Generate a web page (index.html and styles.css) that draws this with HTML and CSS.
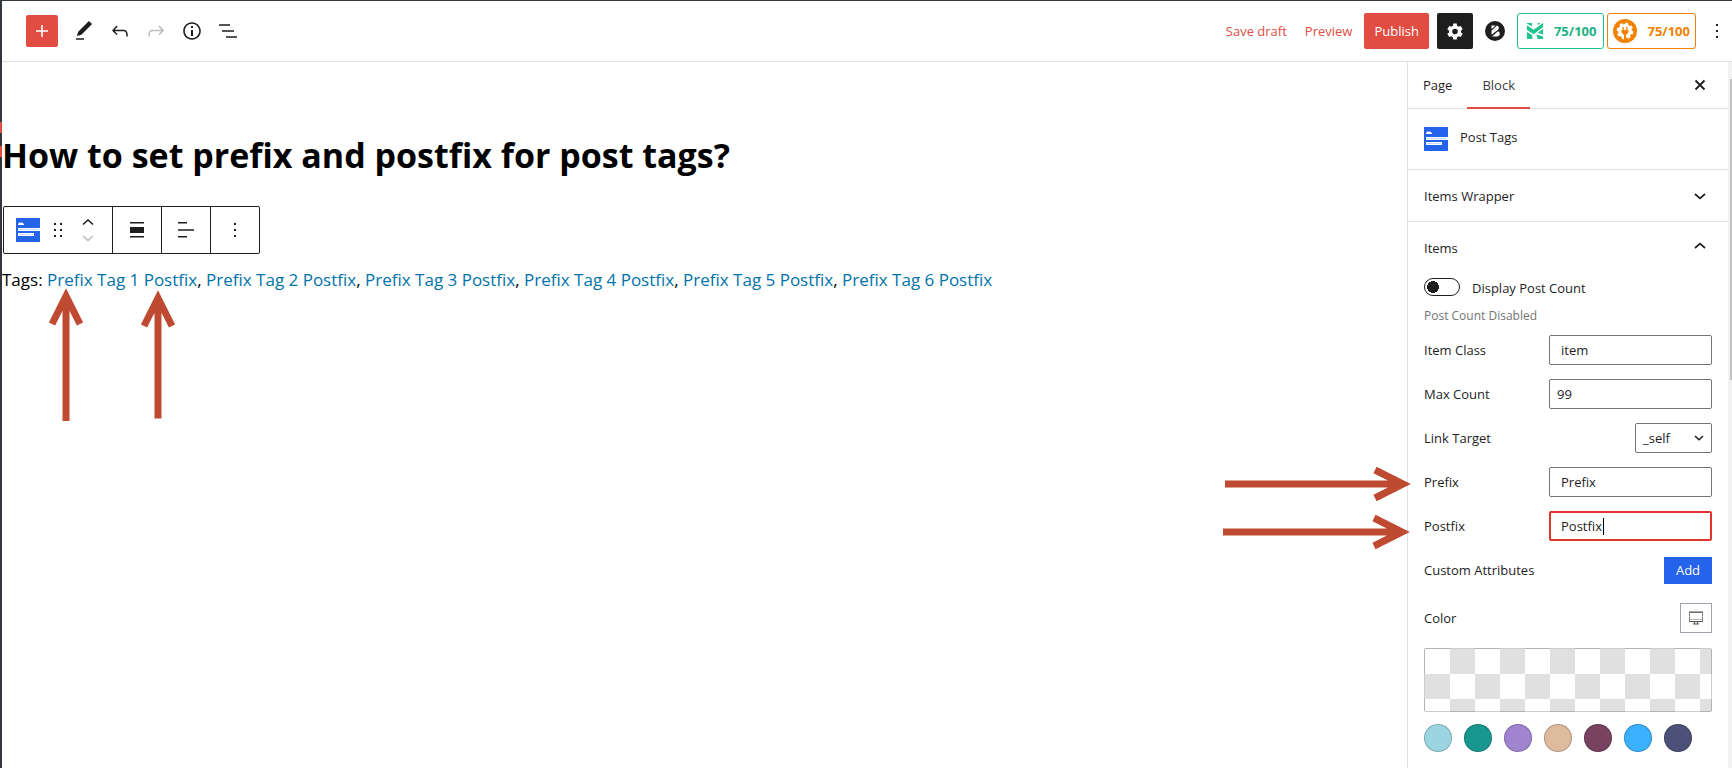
FILE: index.html
```html
<!DOCTYPE html>
<html lang="en">
<head>
<meta charset="utf-8">
<title>Edit Page</title>
<link rel="stylesheet" href="styles.css">
</head>
<body>
<div class="app">
  <div class="rail"><span class="rail-mark"></span><span class="rail-mark"></span></div>
  <div class="editor">
    <header class="topbar">
      <div class="tools">
        <button class="btn-insert" aria-label="Add block"><svg viewBox="0 0 24 24"><path d="M18 11.2h-5.2V6h-1.6v5.2H6v1.6h5.2V18h1.6v-5.2H18z"/></svg></button>
        <button class="icon-btn" aria-label="Tools"><svg viewBox="0 0 24 24"><path d="M20.1 5.1L16.9 2 6.2 12.7l-1.3 4.4 4.5-1.3L20.1 5.1zM4 20.8h8v-1.5H4v1.5z"/></svg></button>
        <button class="icon-btn" aria-label="Undo"><svg viewBox="0 0 24 24"><path d="M18.3 11.7c-.6-.6-1.4-.9-2.3-.9H6.7l2.9-3.3-1.1-1-4.5 5L8.500 16l1-1-2.700-2.700H16c.5 0 .9.2 1.300.5 1 1 1 3.400 1 4.500v.3h1.500v-.2c0-1.500 0-4.300-1.500-5.700z"/></svg></button>
        <button class="icon-btn icon-off" aria-label="Redo"><svg viewBox="0 0 24 24"><path d="M15.600 6.500l-1.100 1 2.900 3.300H8c-.9 0-1.700.3-2.300.9-1.400 1.500-1.400 4.200-1.400 5.600v.2h1.500v-.3c0-1.100 0-3.500 1-4.500.3-.3.7-.5 1.300-.5h9.200L14.500 15l1.100 1.100 4.600-4.600-4.600-5z"/></svg></button>
        <button class="icon-btn" aria-label="Details"><svg viewBox="0 0 24 24"><path d="M12 3.200c-4.800 0-8.800 3.900-8.800 8.800 0 4.800 3.900 8.800 8.800 8.800 4.800 0 8.800-3.900 8.800-8.800 0-4.800-4-8.800-8.800-8.800zm0 16c-4 0-7.200-3.300-7.200-7.200C4.800 8 8 4.800 12 4.800s7.200 3.300 7.200 7.200c0 4-3.200 7.200-7.200 7.200zM11 17h2v-6h-2v6zm0-8h2V7h-2v2z"/></svg></button>
        <button class="icon-btn" aria-label="List view"><svg viewBox="0 0 24 24"><path d="M3 5.200h11v1.600H3zM6 11.200h12v1.600H6zM10 17.200h11v1.600H10z"/></svg></button>
      </div>
      <div class="actions">
        <button class="btn-link">Save draft</button>
        <button class="btn-link">Preview</button>
        <button class="btn-publish">Publish</button>
        <button class="btn-settings" aria-label="Settings"><svg viewBox="0 0 24 24"><path fill-rule="evenodd" d="M10.300 4.500l-.4 2.300a5.600 5.600 0 0 0-1.500.9L6.200 6.900 4.300 10.200l1.800 1.500a5 5 0 0 0 0 1.700L4.300 14.800l1.900 3.300 2.200-.8a5.600 5.600 0 0 0 1.500.9l.4 2.300h3.400l.4-2.300a5.600 5.600 0 0 0 1.500-.9l2.200.8 1.900-3.300-1.800-1.400a5 5 0 0 0 0-1.700l1.800-1.500-1.900-3.300-2.200.8a5.600 5.600 0 0 0-1.500-.9l-.4-2.300zM12 9.700a2.800 2.800 0 1 1 0 5.600 2.800 2.800 0 0 1 0-5.600z"/></svg></button>
        <button class="btn-brand" aria-label="Blocks"><svg viewBox="0 0 20 20"><circle cx="10" cy="10" r="10" fill="#1e1e1e"/><path d="M6.500 4.500h4L6.500 8.200zM6.500 9.700L12 4.600c2.200.6 2.500 3 1 4.200l-6.500 5zM7 15.500l6-5.200c2.800 1 2.200 5.200-1 5.200z" fill="#fff"/></svg></button>
        <div class="badges">
          <button class="badge badge-green"><svg viewBox="0 0 20 20"><path d="M1 1h5.500v4L1 1.800zM1 3.500l7.500 5.200L19 1v4.500L8.600 13.500 1 9zM1 11l6 3.500V19H1zM13 12l6-4.500v6.500zM11.500 14l7.500 2v3h-6zM13 1h3l-3 2.500z" fill="#1fc48e"/></svg>75/100</button>
          <button class="badge badge-orange"><svg viewBox="0 0 24 24"><circle cx="12" cy="12" r="12" fill="#f18200"/><circle cx="12" cy="12" r="7" fill="#fff"/><circle cx="12" cy="12" r="7.200" fill="none" stroke="#fff" stroke-width="2.400" stroke-dasharray="3 2.650"/><path d="M9.500 8v3h-1v2.500l2.500 2.600V21h2v-4.900l2.500-2.600V11h-1V8h-1.300v3h-2.400V8z" fill="#f18200"/></svg>75/100</button>
        </div>
        <button class="icon-btn btn-more" aria-label="Options"><svg viewBox="0 0 24 24"><path d="M11 5h2v2h-2zM11 11h2v2h-2zM11 17h2v2h-2z"/></svg></button>
      </div>
    </header>
    <div class="workspace">
      <main class="canvas">
        <h1 class="title">How to set prefix and postfix for post tags?</h1>
        <div class="toolbar">
          <div class="group group-main">
            <svg class="block-icon" viewBox="0 0 24 24"><path fill="#2563eb" d="M0 0h24v24H0z"/><path fill="#fff" d="M2 7V6l1.500-1.500H6L8 6v1zM2 10h22v3H2zM2 15h16v3H2z"/><path fill="#9dbafa" d="M2 11h21v1H2zM3 16h14v1H3z" opacity=".5"/></svg>
            <button class="drag" aria-label="Drag"><svg viewBox="0 0 24 24"><path d="M8 5h2v2H8zM14 5h2v2h-2zM8 11h2v2H8zM14 11h2v2h-2zM8 17h2v2H8zM14 17h2v2h-2z"/></svg></button>
            <div class="movers">
              <button aria-label="Move up"><svg viewBox="0 0 16 16"><path d="M3 10.500L8 6l5 4.500" fill="none" stroke="#1e1e1e" stroke-width="1.600"/></svg></button>
              <button aria-label="Move down"><svg viewBox="0 0 16 16"><path d="M3 6l5 4.500L13 6" fill="none" stroke="#bbb" stroke-width="1.600"/></svg></button>
            </div>
          </div>
          <button class="group" aria-label="Align"><svg viewBox="0 0 24 24"><path d="M5 4h14v1.600H5zM5 9h14v6H5zM5 18h14v1.600H5z"/></svg></button>
          <button class="group" aria-label="Align text"><svg viewBox="0 0 24 24"><path d="M4 4h9v1.600H4zM4 11.200h16v1.600H4zM4 18h9v1.600H4z"/></svg></button>
          <button class="group" aria-label="Options"><svg viewBox="0 0 24 24"><path d="M11 5h2v2h-2zM11 11h2v2h-2zM11 17h2v2h-2z"/></svg></button>
        </div>
        <p class="tags">Tags: <a href="#">Prefix Tag 1 Postfix</a>, <a href="#">Prefix Tag 2 Postfix</a>, <a href="#">Prefix Tag 3 Postfix</a>, <a href="#">Prefix Tag 4 Postfix</a>, <a href="#">Prefix Tag 5 Postfix</a>, <a href="#">Prefix Tag 6 Postfix</a></p>
        <svg class="arrow arrow-prefix-tag" viewBox="0 0 36 134"><path d="M18 133V8M4 36L18 8l14 28"/></svg>
        <svg class="arrow arrow-postfix-tag" viewBox="0 0 36 134"><path d="M18 128.500V8M4 36L18 8l14 28"/></svg>
      </main>
      <aside class="sidebar">
        <div class="tabs">
          <button class="tab">Page</button>
          <button class="tab tab-on">Block</button>
          <button class="close" aria-label="Close"><svg viewBox="0 0 24 24"><path d="M7.500 7.500l9 9M16.500 7.500l-9 9" stroke="#1e1e1e" stroke-width="1.800"/></svg></button>
        </div>
        <div class="card">
          <svg class="block-icon" viewBox="0 0 24 24"><path fill="#2563eb" d="M0 0h24v24H0z"/><path fill="#fff" d="M2 7V6l1.500-1.500H6L8 6v1zM2 10h22v3H2zM2 15h16v3H2z"/><path fill="#9dbafa" d="M2 11h21v1H2zM3 16h14v1H3z" opacity=".5"/></svg>
          <h2 class="card-title">Post Tags</h2>
        </div>
        <button class="panel-head panel-closed">Items Wrapper<svg viewBox="0 0 24 24"><path d="M7 10l5 4.300 5-4.300" fill="none" stroke="#1e1e1e" stroke-width="1.700"/></svg></button>
        <button class="panel-head">Items<svg viewBox="0 0 24 24"><path d="M7 12l5-4.300 5 4.300" fill="none" stroke="#1e1e1e" stroke-width="1.700"/></svg></button>
        <div class="panel">
          <div class="toggle-row"><input class="toggle" type="checkbox" id="count"><label for="count">Display Post Count</label></div>
          <p class="help">Post Count Disabled</p>
          <div class="fields">
            <div class="row"><label for="cls">Item Class</label><input class="text text-wide" id="cls" type="text" value="item"></div>
            <div class="row"><label for="max">Max Count</label><input class="text" id="max" type="text" value="99"></div>
            <div class="row"><label for="target">Link Target</label><div class="select"><select id="target"><option>_self</option></select><svg viewBox="0 0 10 10"><path d="M1 3l4 3.800L9 3" fill="none" stroke="#1e1e1e" stroke-width="1.500"/></svg></div></div>
            <div class="row"><label for="prefix">Prefix</label><input class="text text-wide" id="prefix" type="text" value="Prefix"></div>
            <div class="row"><label for="postfix">Postfix</label><div class="text text-wide text-focus"><input id="postfix" type="text" value="Postfix" size="4"><span class="caret"></span></div></div>
            <div class="row"><span>Custom Attributes</span><button class="btn-add">Add</button></div>
          </div>
          <div class="row color-row"><span>Color</span><button class="device" aria-label="Device"><svg viewBox="0 0 14 14"><path d="M.5 1.500h13v9H.5z" fill="#fff" stroke="#888"/><path d="M0 1h14M0 10.500h14" stroke="#555" stroke-width="1"/><path d="M1 8.500h12" stroke="#bbb"/><path d="M5 11h1v1.500H5zM8 11h1v1.500H8zM4 12.500h6v1H4z" fill="#555"/></svg></button></div>
          <button class="checker" aria-label="Custom color"></button>
          <div class="swatches">
            <button class="swatch aqua" aria-label="Aqua"></button><button class="swatch teal" aria-label="Teal"></button><button class="swatch violet" aria-label="Violet"></button><button class="swatch sand" aria-label="Sand"></button><button class="swatch plum" aria-label="Plum"></button><button class="swatch sky" aria-label="Sky"></button><button class="swatch indigo" aria-label="Indigo"></button>
          </div>
        </div>
        <svg class="arrow arrow-prefix" viewBox="0 0 188 36"><path d="M2 18h176M152 4l28 14-28 14"/></svg>
        <svg class="arrow arrow-postfix" viewBox="0 0 188 36"><path d="M1 18h177M152 4l28 14-28 14"/></svg>
      </aside>
      <div class="scrollbar"><div class="thumb"></div></div>
    </div>
  </div>
</div>
</body>
</html>
```
FILE: styles.css
```css
* { box-sizing: border-box; }
body { margin: 0; background: #fff; color: #1e1e1e; font: 13px/18px "Open Sans", "Noto Sans", sans-serif; }
button, input, select { font: inherit; color: inherit; margin: 0; }
button { background: none; border: 0; padding: 0; cursor: pointer; }
svg { display: block; fill: currentColor; flex: none; }
h1, h2, p { margin: 0; }

.app { display: flex; height: 100vh; overflow: hidden; border-top: 1px solid #32373c; }
.rail { width: 2px; flex: none; background: #32373c; padding-top: 121px; display: flex; flex-direction: column; gap: 13px; }
.rail-mark { height: 11px; background: #e14d43; }
.editor { flex: 1; min-width: 0; display: flex; flex-direction: column; }

.topbar { display: flex; justify-content: space-between; align-items: center; height: 61px; flex: none; border-bottom: 1px solid #e0e0e0; padding: 0 3px 0 24px; }
.tools { display: flex; align-items: center; gap: 12px; }
.btn-insert { width: 32px; height: 32px; margin-right: 2px; border-radius: 2px; background: #e14d43; color: #fff; display: grid; place-items: center; }
.btn-insert svg, .icon-btn svg, .btn-settings svg { width: 24px; height: 24px; }
.icon-off { color: #bbb; }
.actions { display: flex; align-items: center; }
.btn-link { color: #e14d43; margin-right: 18px; }
.btn-link + .btn-publish { margin-left: -6px; }
.btn-publish { height: 36px; padding: 0 10px; background: #e14d43; color: #fff; border-radius: 2px; }
.btn-settings { width: 36px; height: 36px; margin: 0 12px 0 8px; background: #1e1e1e; color: #fff; border-radius: 2px; display: grid; place-items: center; }
.btn-brand { width: 20px; margin-right: 12px; }
.badges { display: flex; gap: 3px; }
.badge { height: 36px; border: 1px solid; border-radius: 3px; display: flex; align-items: center; font-weight: 700; }
.badge-green { color: #21b183; border-color: #1fc48e; padding: 0 7px 0 8px; gap: 10px; }
.badge-green svg { width: 18px; height: 18px; }
.badge-orange { color: #f18200; padding: 0 5px; gap: 10px; }
.badge-orange svg { width: 24px; height: 24px; }
.btn-more { margin-left: 9px; }

.workspace { flex: 1; min-height: 0; display: flex; }
.canvas { flex: 1; min-width: 0; position: relative; padding-top: 68px; }
.title { font-size: 34px; line-height: 50px; font-weight: 700; color: #000; }
.toolbar { display: inline-flex; height: 48px; margin: 26px 0 0 1px; border: 1px solid #1e1e1e; border-radius: 2px; }
.group { width: 49px; display: grid; place-items: center; border-left: 1px solid #1e1e1e; }
.group svg { width: 24px; height: 24px; }
.group-main { width: 108px; border-left: 0; display: flex; align-items: center; padding-left: 12px; }
.group .drag { margin-left: 6px; }
.movers { margin-left: 10px; }
.movers button { display: block; }
.group .movers svg { width: 16px; height: 16px; }
.block-icon { width: 24px; height: 24px; }
.tags { margin-top: 12px; font-size: 17px; line-height: 28px; color: #000; }
.tags a { color: #0073aa; text-decoration: none; }

.arrow { position: absolute; overflow: visible; fill: none; stroke: #bf4a32; stroke-width: 7; pointer-events: none; }
.arrow-prefix-tag, .arrow-postfix-tag { width: 36px; height: 134px; }
.arrow-prefix-tag { left: 46px; top: 226px; }
.arrow-postfix-tag { left: 138px; top: 228px; }
.arrow-prefix, .arrow-postfix { width: 188px; height: 36px; right: calc(100% - 3px); }
.arrow-prefix { top: 404px; }
.arrow-postfix { top: 452px; right: calc(100% - 2px); }

.sidebar { width: 321px; flex: none; position: relative; border-left: 1px solid #e0e0e0; }
.tabs { display: flex; height: 47px; border-bottom: 1px solid #e0e0e0; padding-right: 16px; }
.tab { padding: 0 15px; }
.tab-on { color: #3c3c3c; box-shadow: 0 1px #e14d43, inset 0 -1px #e14d43; }
.close { margin-left: auto; }
.close svg { width: 24px; height: 24px; }
.card { height: 61px; display: flex; gap: 12px; padding: 18px 16px; border-bottom: 1px solid #e0e0e0; }
.card-title { font-size: 13px; line-height: 20px; font-weight: 400; }
.panel-head { width: 100%; height: 52px; padding: 0 16px; display: flex; justify-content: space-between; align-items: center; }
.panel-closed { border-bottom: 1px solid #e0e0e0; }
.panel-head svg { width: 24px; height: 24px; }
.panel { padding: 1px 16px 0; }
.toggle-row { display: flex; gap: 12px; height: 26px; align-items: center; }
.toggle { appearance: none; width: 36px; height: 18px; margin-bottom: 2px; border: 1px solid #1e1e1e; border-radius: 9px; background: radial-gradient(circle at 8px 8px, #1e1e1e 6px, transparent 6px); }
.help { margin-top: 7px; font-size: 12px; line-height: 16px; color: #757575; }
.fields { display: flex; flex-direction: column; gap: 14px; margin-top: 11px; }
.row { display: flex; justify-content: space-between; align-items: center; height: 30px; }
.text { width: 163px; height: 30px; padding: 0 7px; border: 1px solid #757575; border-radius: 2px; background: #fff; outline: 0; }
.text-wide { padding: 0 11px; }
.text-focus { display: flex; align-items: center; border: 2px solid #e0362c; padding: 0 10px; }
.text-focus input { width: 42px; padding: 0; border: 0; outline: 0; background: none; }
.caret { width: 1px; height: 17px; background: #000; }
.select { position: relative; width: 77px; }
.select select { appearance: none; width: 100%; height: 30px; padding: 0 7px; border: 1px solid #757575; border-radius: 2px; background: #fff; }
.select svg { position: absolute; right: 8px; top: 10px; width: 10px; height: 10px; pointer-events: none; }
.btn-add { width: 48px; height: 27px; background: #2563eb; color: #fff; }
.color-row { margin-top: 18px; }
.device { width: 32px; height: 30px; border: 1px solid #9ca3af; display: grid; place-items: center; }
.device svg { width: 14px; height: 14px; }
.checker { display: block; width: 100%; height: 64px; margin-top: 15px; border: 1px solid rgba(0, 0, 0, .2); border-radius: 2px; background: repeating-conic-gradient(#e0e0e0 0 25%, #fff 0 50%) 0 0 / 50px 50px; }
.swatches { display: flex; gap: 12px; margin-top: 12px; }
.swatch { width: 28px; height: 28px; border-radius: 50%; border: 1px solid rgba(0, 0, 0, .2); }
.aqua { background-color: #9bd5df; }
.teal { background-color: #18978f; }
.violet { background-color: #a084cf; }
.sand { background-color: #dfbb9d; }
.plum { background-color: #774360; }
.sky { background-color: #3ab0ff; }
.indigo { background-color: #4c5179; }

.scrollbar { width: 4px; flex: none; background: #f1f1f1; padding: 17px 0 0 2px; }
.thumb { height: 301px; background: #c1c1c1; }
```
